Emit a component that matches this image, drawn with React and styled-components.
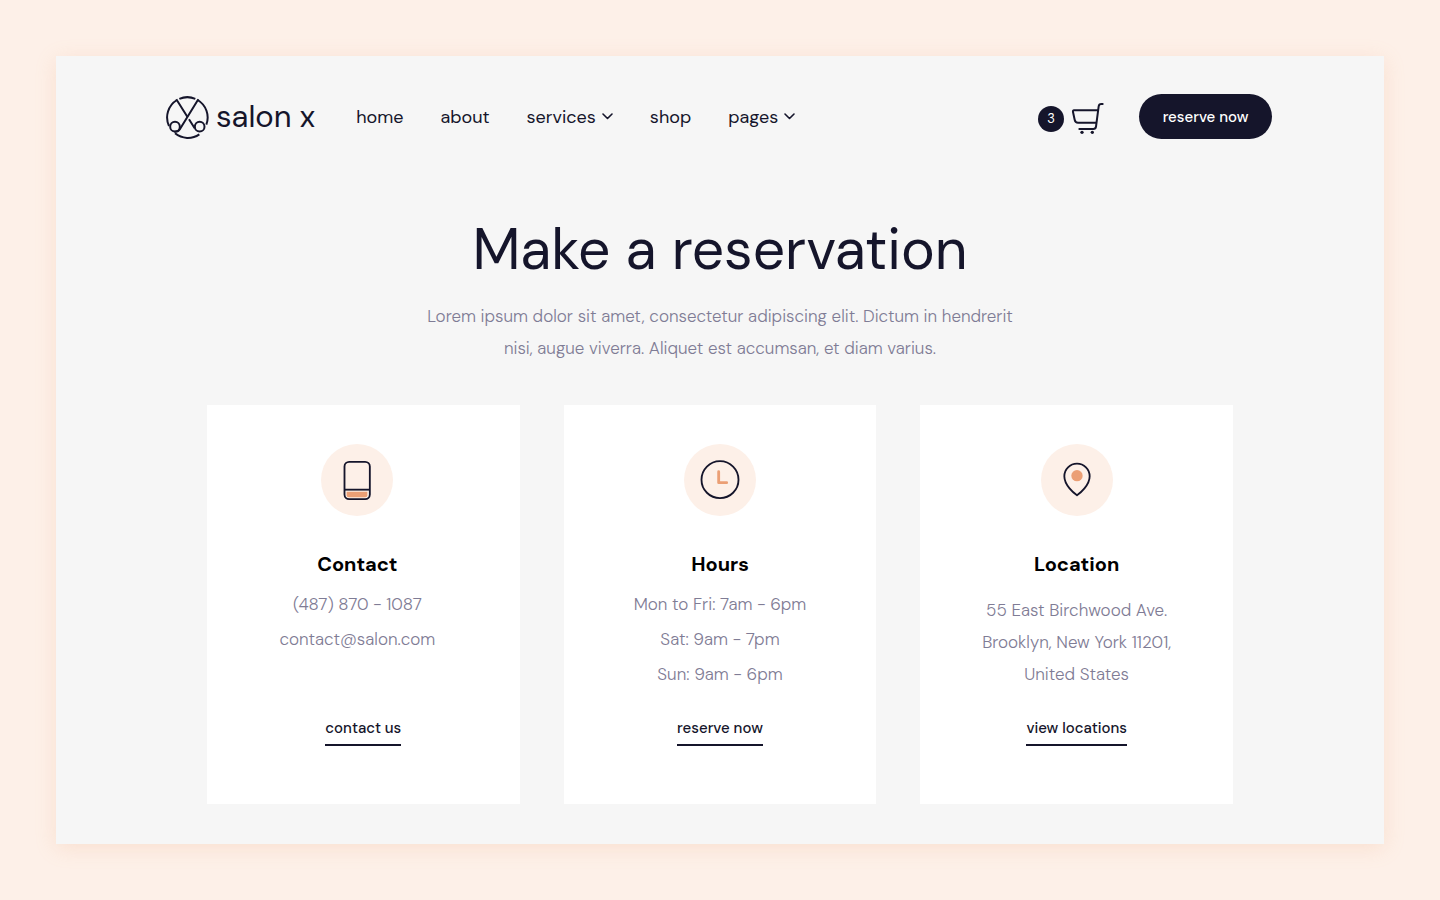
import React from "react";
import styled, { createGlobalStyle } from "styled-components";

const ink = "#15152b";
const muted = "#7f7c95";
const peach = "#fdf0e8";
const orange = "#eb9f75";

const GlobalStyle = createGlobalStyle`
  * { box-sizing: border-box; }
  body {
    margin: 0;
    background: ${peach};
    color: ${ink};
    font-family: "DM Sans", Inter, "Liberation Sans", sans-serif;
  }
`;

const Page = styled.div`
  min-height: 100vh;
  padding: 56px;
  display: flex;
`;

const Frame = styled.div`
  flex: 1;
  min-width: 0;
  background: #f6f6f6;
  box-shadow: 0 4px 20px rgba(235, 159, 117, 0.2);
  padding-bottom: 40px;
`;

const Header = styled.header`
  display: flex;
  align-items: center;
  padding: 38px 112px 0 110px;
`;

const Logo = styled.a`
  display: flex;
  align-items: center;
  gap: 7px;
  color: ${ink};
  font-size: 31px;
  line-height: 44px;
  text-decoration: none;
`;

const Nav = styled.nav`
  display: flex;
  align-items: center;
  gap: 37px;
  margin-left: 41px;
`;

const NavLink = styled.a`
  display: flex;
  align-items: center;
  gap: 6px;
  color: ${ink};
  font-size: 18px;
  line-height: 24px;
  text-decoration: none;
`;

const Actions = styled.div`
  display: flex;
  align-items: center;
  gap: 35px;
  margin-left: auto;
`;

const CartLink = styled.a`
  display: flex;
  align-items: center;
  gap: 7px;
  padding-top: 4px;
  color: ${ink};
  text-decoration: none;
`;

const Badge = styled.span`
  width: 26px;
  height: 26px;
  border-radius: 50%;
  background: ${ink};
  color: #fff;
  font-size: 13px;
  line-height: 26px;
  text-align: center;
`;

const ReserveButton = styled.button`
  width: 133px;
  height: 45px;
  padding: 0;
  border: 0;
  border-radius: 24px;
  background: ${ink};
  color: #fff;
  font-family: inherit;
  font-size: 15px;
  font-weight: 500;
  cursor: pointer;
`;

const Intro = styled.section`
  padding-top: 75px;
  text-align: center;
`;

const Title = styled.h1`
  margin: 0;
  font-size: 57px;
  line-height: 72px;
  font-weight: 400;
`;

const Lead = styled.p`
  max-width: 620px;
  margin: 14px auto 0;
  color: ${muted};
  font-size: 17px;
  line-height: 32px;
  font-weight: 300;
`;

const Cards = styled.section`
  display: grid;
  grid-template-columns: repeat(3, 1fr);
  gap: 44px;
  max-width: 1026px;
  margin: 41px auto 0;
`;

const Card = styled.article`
  display: flex;
  flex-direction: column;
  align-items: center;
  padding: 39px 0 58px;
  background: #fff;
  text-align: center;
`;

const CardBody = styled.div`
  display: flex;
  flex-direction: column;
  align-items: center;
  padding-right: ${(p) => p.$inset || 0}px;
  margin-bottom: 26px;
`;

const CardTitle = styled.h2`
  margin: 32px 0 0;
  color: #000;
  font-size: 20px;
  line-height: 32px;
  font-weight: 700;
`;

const Details = styled.div`
  margin-top: ${(p) => (p.$compact ? 14 : 7)}px;
  color: ${muted};
  font-size: 17px;
  line-height: ${(p) => (p.$compact ? 32 : 35)}px;
  font-weight: 300;
`;

const Line = styled.div``;

const CardLink = styled.a`
  margin-top: auto;
  padding-bottom: 6px;
  border-bottom: 2px solid ${ink};
  color: ${ink};
  font-size: 15px;
  line-height: 20px;
  font-weight: 500;
  text-decoration: none;
`;

const LogoMark = () => (
  <svg width="43" height="45" viewBox="48 44 129 135" fill="none" stroke={ink} strokeWidth="6" aria-hidden="true">
    <path d="M88 58.5 A61 61 0 0 1 136 58.5" />
    <path d="M81 62 A61 61 0 0 0 57 140" />
    <path d="M143 62 A61 61 0 0 1 169 136" />
    <path d="M75 162 A61 61 0 0 0 148 165" />
    <path d="M79 60 L112 112 M117 120 L134 147" />
    <path d="M145 60 L90 149 Q84 159 73 157" />
    <circle cx="75" cy="142" r="14.5" />
    <circle cx="149" cy="142" r="14.5" />
  </svg>
);

const Chevron = () => (
  <svg width="11" height="7" viewBox="0 0 11 7" fill="none" stroke={ink} strokeWidth="1.6" strokeLinecap="round" strokeLinejoin="round" aria-hidden="true">
    <path d="M1 1 L5.5 5.5 L10 1" />
  </svg>
);

const CartIcon = () => (
  <svg width="33" height="33" viewBox="154 66 99 99" fill="none" stroke={ink} strokeWidth="6" strokeLinecap="round" strokeLinejoin="round" aria-hidden="true">
    <path d="M249 72 H245 Q238 72 237 79 L229 140 Q228 147 221 147 H179" />
    <path d="M234 91 H163 Q159 91 160 96 L165 119 Q167 128 175 128 H229" />
    <circle cx="187" cy="157" r="5" fill={ink} stroke="none" />
    <circle cx="218" cy="157" r="5" fill={ink} stroke="none" />
  </svg>
);

const RoundIcon = ({ children }) => (
  <svg width="72" height="72" viewBox="0 0 216 216" fill="none" stroke={ink} strokeWidth="5.5" aria-hidden="true">
    <circle cx="108" cy="108" r="108" fill={peach} stroke="none" />
    {children}
  </svg>
);

const icons = {
  phone: (
    <RoundIcon>
      <rect x="70.5" y="53.5" width="76" height="112" rx="14" />
      <path d="M70 137 H146" />
      <path d="M77 143 H139 V154 Q139 160 133 160 H83 Q77 160 77 154 Z" fill={orange} stroke="none" />
    </RoundIcon>
  ),
  clock: (
    <RoundIcon>
      <circle cx="108" cy="107" r="55.5" />
      <path d="M104 83 V116 H128" stroke={orange} strokeWidth="8.5" strokeLinecap="round" strokeLinejoin="round" />
    </RoundIcon>
  ),
  pin: (
    <RoundIcon>
      <path d="M108 154 C99 148 70 124 70 97 A38 38 0 0 1 146 97 C146 124 117 148 108 154 Z" strokeLinejoin="round" />
      <circle cx="108" cy="95" r="17" fill={orange} stroke="none" />
    </RoundIcon>
  ),
};

const navItems = [
  { label: "home" },
  { label: "about" },
  { label: "services", menu: true },
  { label: "shop" },
  { label: "pages", menu: true },
];

const cards = [
  { icon: "phone", title: "Contact", lines: ["(487) 870 - 1087", "contact@salon.com"], link: "contact us", inset: 12 },
  { icon: "clock", title: "Hours", lines: ["Mon to Fri: 7am - 6pm", "Sat: 9am - 7pm", "Sun: 9am - 6pm"], link: "reserve now" },
  { icon: "pin", title: "Location", lines: ["55 East Birchwood Ave.", "Brooklyn, New York 11201,", "United States"], link: "view locations", compact: true },
];

export default function App() {
  return (
    <Page>
      <GlobalStyle />
      <Frame>
        <Header>
          <Logo href="#">
            <LogoMark />
            salon x
          </Logo>
          <Nav>
            {navItems.map((item) => (
              <NavLink key={item.label} href="#">
                {item.label}
                {item.menu && <Chevron />}
              </NavLink>
            ))}
          </Nav>
          <Actions>
            <CartLink href="#">
              <Badge>3</Badge>
              <CartIcon />
            </CartLink>
            <ReserveButton type="button">reserve now</ReserveButton>
          </Actions>
        </Header>
        <main>
          <Intro>
            <Title>Make a reservation</Title>
            <Lead>
              Lorem ipsum dolor sit amet, consectetur adipiscing elit. Dictum in hendrerit
              <br />
              nisi, augue viverra. Aliquet est accumsan, et diam varius.
            </Lead>
          </Intro>
          <Cards>
            {cards.map((card) => (
              <Card key={card.title}>
                <CardBody $inset={card.inset}>
                  {icons[card.icon]}
                  <CardTitle>{card.title}</CardTitle>
                  <Details $compact={card.compact}>
                    {card.lines.map((line) => (
                      <Line key={line}>{line}</Line>
                    ))}
                  </Details>
                </CardBody>
                <CardLink href="#">{card.link}</CardLink>
              </Card>
            ))}
          </Cards>
        </main>
      </Frame>
    </Page>
  );
}
